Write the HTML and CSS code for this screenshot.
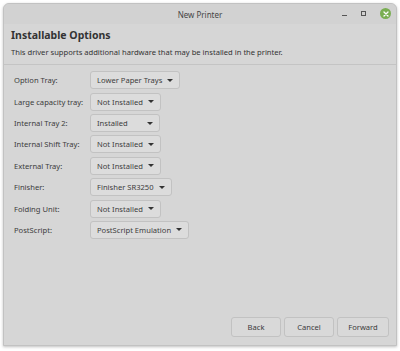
FILE: index.html
```html
<!DOCTYPE html>
<html lang="en">

<head>
    <meta charset="UTF-8">
    <title>New Printer</title>
    <link rel="stylesheet" href="styles.css">
</head>

<body>
    <div class="window">
        <div class="titlebar">
            <span class="title">New Printer</span>
            <div class="controls">
                <span class="ctl-min"></span>
                <span class="ctl-max"></span>
                <span class="ctl-close">
                    <svg width="8" height="8" viewBox="0 0 8 8">
                        <path d="M2 2 L6 6 M6 2 L2 6" stroke="#fff" stroke-width="1.3" stroke-linecap="round" />
                    </svg>
                </span>
            </div>
        </div>

        <div class="header">
            <h1>Installable Options</h1>
            <p>This driver supports additional hardware that may be installed in the printer.</p>
        </div>

        <div class="options">
            <div class="row">
                <label>Option Tray:</label>
                <button class="combo">Lower Paper Trays <span class="arrow"></span></button>
            </div>
            <div class="row">
                <label>Large capacity tray:</label>
                <button class="combo">Not Installed <span class="arrow"></span></button>
            </div>
            <div class="row">
                <label>Internal Tray 2:</label>
                <button class="combo wide">Installed <span class="arrow"></span></button>
            </div>
            <div class="row">
                <label>Internal Shift Tray:</label>
                <button class="combo">Not Installed <span class="arrow"></span></button>
            </div>
            <div class="row">
                <label>External Tray:</label>
                <button class="combo">Not Installed <span class="arrow"></span></button>
            </div>
            <div class="row">
                <label>Finisher:</label>
                <button class="combo">Finisher SR3250 <span class="arrow"></span></button>
            </div>
            <div class="row">
                <label>Folding Unit:</label>
                <button class="combo">Not Installed <span class="arrow"></span></button>
            </div>
            <div class="row">
                <label>PostScript:</label>
                <button class="combo">PostScript Emulation <span class="arrow"></span></button>
            </div>
        </div>

        <div class="actions">
            <button class="btn">Back</button>
            <button class="btn">Cancel</button>
            <button class="btn">Forward</button>
        </div>
    </div>
</body>

</html>
```

FILE: styles.css
```css
* {
    margin: 0;
    padding: 0;
    box-sizing: border-box;
    font-family: "Noto Sans", "Open Sans", sans-serif;
}

body {
    background-color: #ffffff;
    padding: 3px 3px 5px 3px;
    height: 351px;
}

.window {
    height: 343px;
    display: flex;
    flex-direction: column;
    background-color: #d6d6d6;
    border: 1px solid #c2c2c2;
    border-radius: 6px 6px 0 0;
    box-shadow: 0 1px 3px rgba(0, 0, 0, 0.25);
    color: #3a3a3a;
}

.titlebar {
    height: 20px;
    display: flex;
    align-items: center;
    justify-content: center;
    position: relative;
    background-color: #d2d2d2;
    border-radius: 6px 6px 0 0;
}

.title {
    font-size: 8px;
    color: #454545;
}

.controls {
    position: absolute;
    right: 5px;
    top: 4px;
    display: flex;
    align-items: center;
    gap: 14px;
}

.ctl-min {
    width: 5px;
    height: 1px;
    background-color: #555;
    margin-top: 4px;
}

.ctl-max {
    width: 5px;
    height: 5px;
    border: 1px solid #555;
}

.ctl-close {
    width: 11px;
    height: 11px;
    border-radius: 50%;
    background-color: #7aae52;
    display: flex;
    align-items: center;
    justify-content: center;
}

.header {
    padding: 4px 7px 7px 7px;
    border-bottom: 1px solid #c4c4c4;
}

.header h1 {
    font-size: 10.5px;
    font-weight: bold;
    color: #333;
    margin-bottom: 5px;
}

.header p {
    font-size: 7.6px;
    color: #333;
}

.options {
    flex: 1;
    padding: 6px 10px;
    display: flex;
    flex-direction: column;
    gap: 2.9px;
}

.row {
    display: flex;
    align-items: center;
    height: 18.5px;
}

.row label {
    width: 76px;
    font-size: 7.6px;
    color: #3c3c3c;
}

.combo {
    height: 18px;
    padding: 0 6px;
    display: flex;
    align-items: center;
    gap: 5px;
    font-size: 7.6px;
    color: #3c3c3c;
    background-color: #dcdcdc;
    border: 1px solid #c2c2c2;
    border-radius: 3px;
}

.combo.wide {
    width: 70px;
    justify-content: space-between;
}

.arrow {
    width: 0;
    height: 0;
    border-left: 3px solid transparent;
    border-right: 3px solid transparent;
    border-top: 3px solid #333;
}

.actions {
    display: flex;
    justify-content: flex-end;
    gap: 3px;
    padding: 0 7px 8px 0;
}

.btn {
    width: 50px;
    height: 20px;
    font-size: 7.6px;
    color: #3c3c3c;
    background-color: #d9d9d9;
    border: 1px solid #c2c2c2;
    border-radius: 3px;
}

.btn:last-child {
    width: 52px;
}
```
